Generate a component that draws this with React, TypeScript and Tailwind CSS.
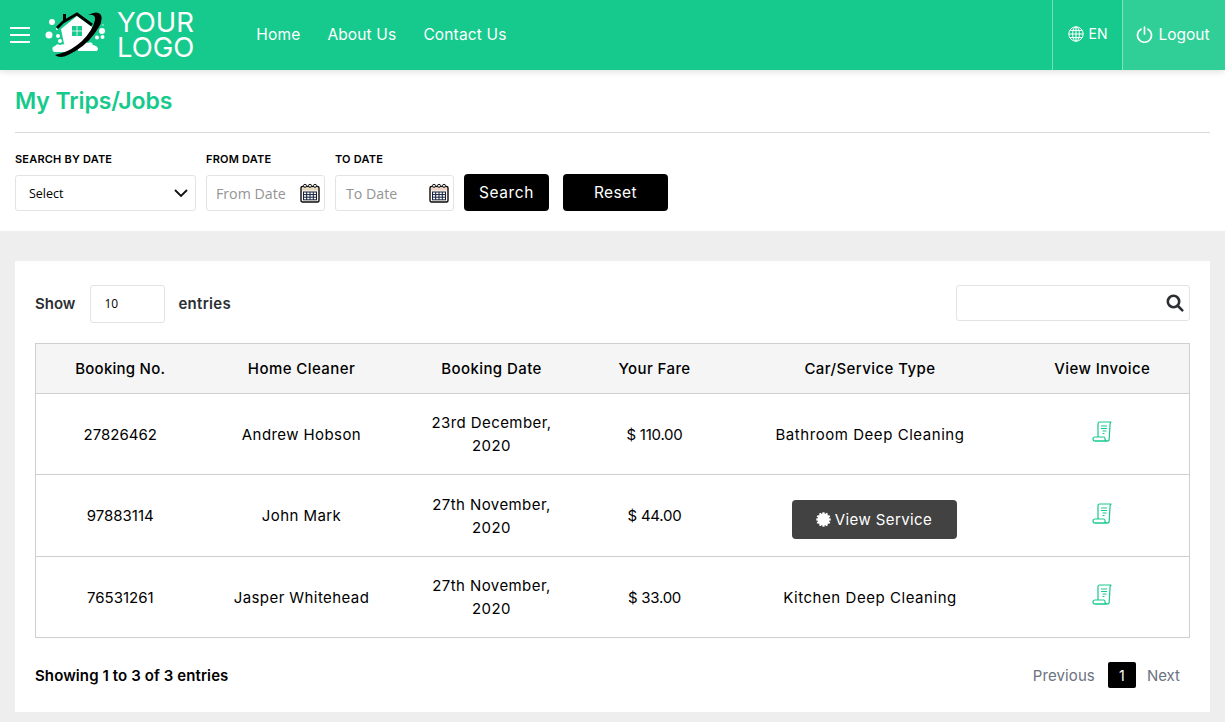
import React from "react";

function Logo() {
  return (
    <svg viewBox="44 10 62 50" className="w-[62px] h-[50px] block">
      <circle cx="52" cy="22" r="3" fill="#fff" />
      <circle cx="49" cy="35" r="3.500" fill="#fff" />
      <circle cx="58" cy="36" r="2" fill="#fff" />
      <circle cx="57" cy="29" r="1" fill="#fff" />
      <circle cx="60" cy="41" r="2" fill="#fff" />
      <circle cx="102" cy="31" r="3" fill="#fff" />
      <circle cx="97" cy="37.500" r="2" fill="#fff" />
      <circle cx="102.500" cy="37" r="2" fill="#fff" />
      <circle cx="103" cy="25" r="0.700" fill="#fff" />
      <path d="M61 29 L77 16 L92 27 L90 39 Q80 48 68 50 L64 44 Z" fill="#fff" />
      <path d="M57 28 L63 22 L77 14 L92 25" fill="none" stroke="#000" strokeWidth="2.800" />
      <rect x="63" y="14" width="3" height="7" fill="#000" />
      <rect x="72" y="26" width="4.600" height="4.600" fill="#16c98c" />
      <rect x="77.400" y="26" width="4.600" height="4.600" fill="#16c98c" />
      <rect x="72" y="31.400" width="4.600" height="4.600" fill="#16c98c" />
      <rect x="77.400" y="31.400" width="4.600" height="4.600" fill="#16c98c" />
      <path d="M53 51 Q51 47 55 46 Q57 43 60 45 Q64 43 67 46 Q72 46 72 49 L71 52 L54 52 Z" fill="#fff" />
      <path d="M78 51 Q77 47 81 45 Q83 41 88 43 Q92 41 93 45 Q98 46 98 49 L97 51 Z" fill="#fff" />
      <path d="M55 55 Q60 59 68 55 Q85 47 95 33 Q104 21 101 15 Q98 10 88 15 Q96 14 95 20 Q93 30 82 41 Q72 50 62 53 Z" fill="#000" />
    </svg>
  );
}

function Globe() {
  return (
    <svg width="16" height="16" viewBox="0 0 16 16" fill="none" stroke="#fff" strokeWidth="1">
      <circle cx="8" cy="8" r="7.200" />
      <ellipse cx="8" cy="8" rx="3.400" ry="7.200" />
      <path d="M8 .8v14.400M.8 8h14.400M1.800 4.400h12.400M1.800 11.600h12.400" />
    </svg>
  );
}

function Power() {
  return (
    <svg width="17" height="17" viewBox="0 0 17 17" fill="none" stroke="#fff" strokeWidth="1.700" strokeLinecap="round">
      <path d="M5 3.200a7 7 0 1 0 7 0" />
      <path d="M8.500 1v7" />
    </svg>
  );
}

function Calendar({ top }: { top: string }) {
  return (
    <svg width="20" height="20" viewBox="0 0 20 20" className="shrink-0">
      <rect x="1" y="3.500" width="18" height="15.500" rx="1.500" fill="#fff8ec" stroke="#0b0b0b" strokeWidth="1.400" />
      <rect x="2" y="4.500" width="16" height="3" fill={top} />
      <rect x="3.500" y="9" width="13" height="7.800" fill="#fff" stroke="#14213d" strokeWidth="1" />
      <path d="M3.500 11.600h13M3.500 14.200h13M6.700 9v7.800M10 9v7.800M13.300 9v7.800" stroke="#14213d" strokeWidth="1" />
      <circle cx="5" cy="2.800" r="1.500" fill="#fff" stroke="#111" />
      <circle cx="10" cy="2.800" r="1.500" fill="#fff" stroke="#111" />
      <circle cx="15" cy="2.800" r="1.500" fill="#fff" stroke="#111" />
    </svg>
  );
}

function Invoice() {
  return (
    <svg width="20" height="21" viewBox="0 0 20 21" fill="none" stroke="#16c98c" strokeWidth="1.200" strokeLinejoin="round" className="inline-block">
      <path d="M6 16V3q0-2 1.500-2H19q-1 1-1 3l-.8 14q0 2-2 2H3" />
      <path d="M1 18q0-2 2-2h9q1 0 1 2q0 2 2 2H3q-2 0-2-2Z" />
      <path d="M9 5h6M9 7.500h6M10.500 10h4M10.500 12.500h2" />
    </svg>
  );
}

function Badge() {
  return (
    <svg width="15" height="15" viewBox="0 0 16 16" fill="#fff">
      <circle cx="8" cy="8" r="6.300" />
      {[0, 30, 60, 90, 120, 150, 180, 210, 240, 270, 300, 330].map((a) => (
        <rect key={a} x="6.800" y="0.300" width="2.400" height="3" transform={`rotate(${a} 8 8)`} />
      ))}
    </svg>
  );
}

function Search() {
  return (
    <svg width="18" height="18" viewBox="0 0 18 18" fill="none" stroke="#2b2f33" strokeWidth="2.600" strokeLinecap="round">
      <circle cx="7.500" cy="7.500" r="5.700" />
      <path d="M12 12l4.300 4.300" />
    </svg>
  );
}

const rows = [
  { no: "27826462", name: "Andrew Hobson", date: ["23rd December,", "2020"], fare: "$ 110.00", type: "Bathroom Deep Cleaning" },
  { no: "97883114", name: "John Mark", date: ["27th November,", "2020"], fare: "$ 44.00", type: null },
  { no: "76531261", name: "Jasper Whitehead", date: ["27th November,", "2020"], fare: "$ 33.00", type: "Kitchen Deep Cleaning" },
];

const heads = ["Booking No.", "Home Cleaner", "Booking Date", "Your Fare", "Car/Service Type", "View Invoice"];

export default function App() {
  return (
    <div className="h-[722px] overflow-hidden bg-[#eeeeee] font-['Inter','Liberation_Sans',sans-serif] text-black">
      <header className="h-[70px] bg-[#16c98c] flex items-stretch shadow-[0_2px_6px_rgba(0,0,0,0.12)] relative text-white">
        <div className="flex items-center pl-[10px]">
          <div className="flex flex-col gap-[5px] w-5">
            <span className="h-[2px] bg-white block" />
            <span className="h-[2px] bg-white block" />
            <span className="h-[2px] bg-white block" />
          </div>
          <div className="ml-[14px]">
            <Logo />
          </div>
          <div className="ml-[11px] text-[27.500px] leading-[25px] font-normal">
            <div>YOUR</div>
            <div>LOGO</div>
          </div>
        </div>
        <nav className="flex items-center gap-[27px] ml-[62px] text-[15.500px] tracking-[0.15px] flex-1">
          <span>Home</span>
          <span>About Us</span>
          <span>Contact Us</span>
        </nav>
        <div className="flex items-center gap-[5px] w-[70px] justify-center border-l border-white/40 text-[14px] pb-[3px]">
          <Globe />
          <span>EN</span>
        </div>
        <div className="flex items-center gap-[5px] w-[103px] justify-center border-l border-white/40 bg-[#2fcf97] text-[15.500px] pb-[1px] pr-[2px]">
          <Power />
          <span>Logout</span>
        </div>
      </header>

      <section className="bg-white h-[161px] px-[15px]">
        <h1 className="text-[23px] leading-[30px] font-semibold tracking-[-0.1px] text-[#16c98c] pt-[16px] h-[63px] border-b border-[#d9d9d9]">My Trips/Jobs</h1>
        <div className="flex items-end mt-[19px]">
          <label className="block w-[181px] mr-[10px]">
            <span className="block text-[11px] leading-[14px] font-semibold mb-[9px] tracking-[0.2px]">SEARCH BY DATE</span>
            <div className="h-[36px] border border-[#e3e3e3] rounded-[3px] flex items-center justify-between pl-[13px] pr-[7px] text-[12.500px] font-['Open_Sans',sans-serif]">
              <span className="pt-[3px]">Select</span>
              <svg width="14" height="9" viewBox="0 0 14 9" fill="none" stroke="#111" strokeWidth="1.800"><path d="M1 1l6 6 6-6" /></svg>
            </div>
          </label>
          <label className="block w-[119px] mr-[10px]">
            <span className="block text-[11px] leading-[14px] font-semibold mb-[9px] tracking-[0.2px]">FROM DATE</span>
            <div className="h-[36px] border border-[#e3e3e3] rounded-[3px] flex items-center justify-between pl-[9px] pr-[4px] text-[14.200px] text-[#949494] font-['Open_Sans',sans-serif]">
              <span className="pt-[1px]">From Date</span>
              <Calendar top="#e8d9c0" />
            </div>
          </label>
          <label className="block w-[119px] mr-[10px]">
            <span className="block text-[11px] leading-[14px] font-semibold mb-[9px] tracking-[0.2px]">TO DATE</span>
            <div className="h-[36px] border border-[#e3e3e3] rounded-[3px] flex items-center justify-between pl-[10px] pr-[4px] text-[14.200px] text-[#949494] font-['Open_Sans',sans-serif]">
              <span className="pt-[1px]">To Date</span>
              <Calendar top="#f0d3c8" />
            </div>
          </label>
          <button className="w-[85px] h-[37px] bg-black text-white rounded-[4px] text-[15.500px] tracking-[0.6px]">Search</button>
          <button className="w-[105px] h-[37px] bg-black text-white rounded-[4px] text-[15.500px] tracking-[0.4px] ml-[14px]">Reset</button>
        </div>
      </section>

      <main className="mx-[15px] mt-[30px] h-[451px] bg-white px-[20px] pt-[24px]">
        <div className="flex items-center justify-between h-[38px]">
          <div className="flex items-center text-[15px] font-semibold text-[#2b2f33]">
            <span>Show</span>
            <span className="w-[75px] h-[38px] border border-[#e3e3e3] rounded-[3px] ml-[15px] mr-[13px] flex items-center pl-[13px] text-[12px] text-black font-normal font-['Open_Sans',sans-serif]">10</span>
            <span className="tracking-[0.3px]">entries</span>
          </div>
          <div className="w-[234px] h-[36px] border border-[#e3e3e3] rounded-[3px] flex items-center justify-end pr-[5px] mb-[2px]">
            <Search />
          </div>
        </div>

        <table className="w-[1154px] mt-[20px] border border-[#cfcfcf] border-collapse table-fixed text-[15px]">
          <colgroup>
            <col className="w-[169px]" />
            <col className="w-[194px]" />
            <col className="w-[186px]" />
            <col className="w-[140px]" />
            <col className="w-[291px]" />
            <col className="w-[174px]" />
          </colgroup>
          <thead>
            <tr className="h-[50px] bg-[#f5f5f5] border-b border-[#cfcfcf]">
              {heads.map((h, i) => (
                <th key={h} className={`font-medium text-center text-[15px] pt-[2px] ${i === 0 ? "tracking-[0.25px]" : "tracking-[0.42px]"}`}>{h}</th>
              ))}
            </tr>
          </thead>
          <tbody>
            {rows.map((r, i) => (
              <tr key={r.no} className={`${i === 1 ? "h-[82px]" : "h-[81px]"} border-b border-[#cfcfcf] text-center`}>
                <td className="pt-[2px]">{r.no}</td>
                <td className="pt-[2px] tracking-[0.42px]">{r.name}</td>
                <td className="leading-[23px] tracking-[0.42px]">
                  {r.date[0]}
                  <br />
                  {r.date[1]}
                </td>
                <td className="pt-[2px] tracking-[-0.25px]">{r.fare}</td>
                <td className="pt-[2px] tracking-[0.55px]">
                  {r.type ?? (
                    <button className="inline-flex items-center justify-center gap-[4px] w-[165px] h-[39px] bg-[#424242] text-white rounded-[4px] text-[15px] tracking-[0.4px] ml-[8px] mt-[6px]">
                      <Badge />
                      <span className="pt-[1px]">View Service</span>
                    </button>
                  )}
                </td>
                <td>
                  <span className="block -mt-[6px]">
                    <Invoice />
                  </span>
                </td>
              </tr>
            ))}
          </tbody>
        </table>

        <div className="flex items-center justify-between mt-[25px]">
          <span className="text-[15px] font-semibold tracking-[0.1px]">Showing 1 to 3 of 3 entries</span>
          <div className="flex items-center text-[15px] text-[#6b7280] pr-[10px]">
            <span className="tracking-[0.1px]">Previous</span>
            <span className="w-[28px] h-[26px] bg-black text-white rounded-[2px] flex items-center justify-center ml-[13px] mr-[11px] text-[14px] -translate-y-px">1</span>
            <span>Next</span>
          </div>
        </div>
      </main>
    </div>
  );
}
